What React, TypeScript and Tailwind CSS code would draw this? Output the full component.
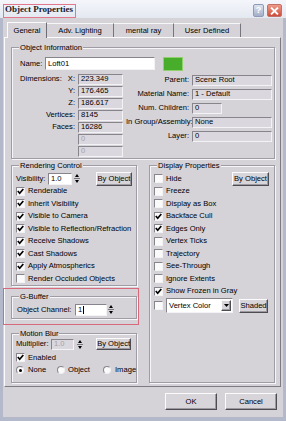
const sunken = "border border-t-[#87848c] border-l-[#87848c] border-r-[#f3f2f5] border-b-[#f3f2f5]";
const raised = "border border-t-[#fbfbfc] border-l-[#fbfbfc] border-r-[#4e4c53] border-b-[#4e4c53] shadow-[inset_-1px_-1px_0_#9c99a1]";

function Box({ on }: { on?: boolean }) {
  return (
    <span className={`w-[9px] h-[9px] shrink-0 bg-[#fafafb] ${sunken} flex items-center justify-center`}>
      {on && (
        <svg width="7" height="7" viewBox="0 0 7 7">
          <path d="M0.8 3 L2.7 5.2 L6.3 1" fill="none" stroke="#000" strokeWidth="1.7" />
        </svg>
      )}
    </span>
  );
}

function Radio({ on }: { on?: boolean }) {
  return (
    <span className="w-[8px] h-[8px] shrink-0 rounded-full bg-[#fafafb] border border-t-[#87848c] border-l-[#87848c] border-r-[#eeeef0] border-b-[#eeeef0] flex items-center justify-center">
      {on && <span className="w-[3px] h-[3px] rounded-full bg-black" />}
    </span>
  );
}

function Spin() {
  return (
    <span className="w-[6px] h-[11px] shrink-0 flex flex-col">
      <span className="flex-1 flex items-center justify-center border-b border-[#77747c]">
        <svg width="4" height="3" viewBox="0 0 4 3"><path d="M2 0 L4 3 L0 3Z" fill="#000" /></svg>
      </span>
      <span className="flex-1 flex items-center justify-center">
        <svg width="4" height="3" viewBox="0 0 4 3"><path d="M0 0 L4 0 L2 3Z" fill="#000" /></svg>
      </span>
    </span>
  );
}

function Btn({ label, className }: { label: string; className: string }) {
  return (
    <span className={`${raised} bg-[#d7d4da] flex items-center justify-center shrink-0 ${className}`}>{label}</span>
  );
}

function Group({ title, className, children }: { title: string; className: string; children?: React.ReactNode }) {
  return (
    <fieldset className={`border border-[#9f9ca5] shadow-[inset_1px_1px_0_#f6f6f8,1px_1px_0_#f6f6f8] ${className}`}>
      <legend className="ml-[7px] px-[1px] leading-[9px] bg-[#d5d2d8]">{title}</legend>
      {children}
    </fieldset>
  );
}

function CheckRow({ label, on, pad }: { label: string; on?: boolean; pad: string }) {
  return (
    <div className={`h-[12.5px] flex items-center gap-[3px] ${pad}`}>
      <Box on={on} />
      <span>{label}</span>
    </div>
  );
}

function RO({ v, w, dim }: { v: string; w: string; dim?: boolean }) {
  return (
    <span className={`${w} h-[11px] ${sunken} bg-[#dad8de] flex items-center pl-[2px] ${dim ? "text-[#a3a1a8]" : ""}`}>{v}</span>
  );
}

export default function App() {
  const leftInfo: [string, string, string, boolean?][] = [
    ["Dimensions:", "X:", "223.349"],
    ["", "Y:", "176.465"],
    ["", "Z:", "186.617"],
    ["", "Vertices:", "8145"],
    ["", "Faces:", "16286"],
    ["", "", "0", true],
    ["", "", "0", true],
  ];
  const rightInfo: [string, string, string][] = [
    ["Parent:", "Scene Root", "w-[80px]"],
    ["Material Name:", "1 - Default", "w-[80px]"],
    ["Num. Children:", "0", "w-[30px]"],
    ["In Group/Assembly:", "None", "w-[80px]"],
    ["Layer:", "0", "w-[80px]"],
  ];
  const render: [string, boolean][] = [
    ["Renderable", true],
    ["Inherit Visibility", true],
    ["Visible to Camera", true],
    ["Visible to Reflection/Refraction", true],
    ["Receive Shadows", true],
    ["Cast Shadows", true],
    ["Apply Atmospherics", true],
    ["Render Occluded Objects", false],
  ];
  const display: [string, boolean][] = [
    ["Freeze", false],
    ["Display as Box", false],
    ["Backface Cull", true],
    ["Edges Only", true],
    ["Vertex Ticks", false],
    ["Trajectory", false],
    ["See-Through", false],
    ["Ignore Extents", false],
    ["Show Frozen in Gray", true],
  ];

  return (
    <div className="w-[286px] h-[421px] relative overflow-hidden bg-[#b3b8cb] flex flex-col font-['Liberation_Sans',Arial,sans-serif] text-[7.6px] leading-none text-black">
      {/* title bar */}
      <div className="h-[18px] shrink-0 flex items-center bg-gradient-to-b from-[#f4f6fb] to-[#e4e8f0]">
        <span className="ml-[5px] mt-[1px] font-['Liberation_Serif',serif] font-bold text-[9px] text-[#1b1b2a]">Object Properties</span>
        <span className="ml-auto w-[11px] h-[13px] mt-[3px] rounded-[2px] bg-gradient-to-b from-[#dce2ee] to-[#a3afc9] border border-[#8e9ab6] text-white font-bold text-[9px] flex items-center justify-center">?</span>
        <span className="ml-[3px] mr-[4px] w-[15px] h-[13px] mt-[3px] rounded-[2px] bg-gradient-to-b from-[#ee9a88] to-[#cf4b3a] border border-[#c4706a] flex items-center justify-center">
          <svg width="9" height="8" viewBox="0 0 9 8"><path d="M1 0.5 L8 7.5 M8 0.5 L1 7.5" stroke="#fff" strokeWidth="1.8" /></svg>
        </span>
      </div>

      {/* client */}
      <div className="flex-1 mx-[3px] mb-[4px] bg-[#d5d2d8] flex flex-col">
        {/* tabs */}
        <div className="h-[19px] shrink-0 flex items-end pl-[4px]">
          <div className="w-[40px] h-[16px] -mb-[1px] z-10 bg-[#d5d2d8] border-t border-l border-[#fbfbfc] border-r border-r-[#6f6d75] flex items-center justify-center">General</div>
          {[
            ["Adv. Lighting", "w-[67px]"],
            ["mental ray", "w-[60px]"],
            ["User Defined", "w-[67px]"],
          ].map(([t, w]) => (
            <div key={t} className={`${w} h-[14px] border-t border-[#f7f7f9] border-r border-r-[#77757c] flex items-center justify-center`}>{t}</div>
          ))}
        </div>

        {/* tab page */}
        <div className="ml-[1px] w-[277px] h-[350px] shrink-0 border border-t-[#fbfbfc] border-l-[#fbfbfc] border-r-[#7c7a82] border-b-[#7c7a82] flex flex-col">
          <Group title="Object Information" className="ml-[6px] mt-[5px] w-[264px] h-[116px] shrink-0">
            <div className="mt-[5px] h-[13px] flex items-center pl-[8px]">
              <span className="w-[25px]">Name:</span>
              <span className={`w-[110px] h-[13px] bg-white ${sunken} flex items-center pl-[2px]`}>Loft01</span>
              <span className="ml-[8px] w-[20px] h-[14px] bg-[#48ad2b] border border-[#8fcf6c]" />
            </div>
            <div className="mt-[3px] flex">
              <div className="w-[114px] flex flex-col">
                {leftInfo.map(([a, b, v, dim], i) => (
                  <div key={i} className="h-[12px] flex items-center">
                    <span className="w-[66px] pl-[8px] pr-[3px] flex justify-between">
                      <span>{a}</span>
                      <span>{b}</span>
                    </span>
                    <RO v={v} w="w-[45px]" dim={dim} />
                  </div>
                ))}
              </div>
              <div className="flex-1 flex flex-col">
                {rightInfo.map(([a, v, w]) => (
                  <div key={a} className="h-[14px] flex items-center">
                    <span className="w-[66px] pr-[3px] text-right whitespace-nowrap">{a}</span>
                    <RO v={v} w={w} />
                  </div>
                ))}
              </div>
            </div>
          </Group>

          <div className="mt-[2px] ml-[6px] flex gap-[12px]">
            <div className="w-[126px] flex flex-col">
              <Group title="Rendering Control" className="h-[125px]">
                <div className="mt-[2px] h-[13px] flex items-center pl-[4px]">
                  <span className="w-[32px]">Visibility:</span>
                  <span className={`w-[24px] h-[12px] bg-white ${sunken} flex items-center pl-[2px]`}>1.0</span>
                  <span className="ml-[2px]"><Spin /></span>
                  <Btn label="By Object" className="ml-auto mr-[4px] w-[36px] h-[14px]" />
                </div>
                {render.map(([t, on]) => (
                  <CheckRow key={t} label={t} on={on} pad="pl-[4px]" />
                ))}
              </Group>
              <Group title="G-Buffer" className="mt-[6px] h-[27px]">
                <div className="mt-[2px] h-[13px] flex items-center pl-[5px]">
                  <span className="w-[58px]">Object Channel:</span>
                  <span className={`w-[32px] h-[12px] bg-white ${sunken} flex items-center pl-[2px]`}>
                    1<span className="w-px h-[8px] bg-black ml-[1px]" />
                  </span>
                  <span className="ml-[1px]"><Spin /></span>
                </div>
              </Group>
              <Group title="Motion Blur" className="mt-[10px] h-[54px]">
                <div className="h-[12px] flex items-center pl-[4px]">
                  <span className="w-[35px]">Multiplier:</span>
                  <RO v="1.0" w="w-[23px]" dim />
                  <span className="ml-[3px]"><Spin /></span>
                  <Btn label="By Object" className="ml-auto mr-[5px] w-[35px] h-[12px]" />
                </div>
                <div className="mt-[1px] h-[13px] flex items-center gap-[3px] pl-[4px]">
                  <Box on />
                  <span>Enabled</span>
                </div>
                <div className="h-[12px] flex items-center pl-[4px]">
                  <Radio on />
                  <span className="ml-[4px] w-[29px]">None</span>
                  <Radio />
                  <span className="ml-[3px] w-[35px]">Object</span>
                  <Radio />
                  <span className="ml-[4px]">Image</span>
                </div>
              </Group>
            </div>

            <Group title="Display Properties" className="w-[126px] h-[222px]">
              <div className="mt-[2px] h-[13px] flex items-center gap-[3px] pl-[4px]">
                <Box />
                <span>Hide</span>
                <Btn label="By Object" className="ml-auto mr-[5px] w-[37px] h-[14px]" />
              </div>
              {display.map(([t, on]) => (
                <CheckRow key={t} label={t} on={on} pad="pl-[4px]" />
              ))}
              <div className="h-[16px] flex items-center pl-[4px]">
                <Box />
                <span className={`ml-[3px] w-[67px] h-[15px] bg-white ${sunken} flex items-center pl-[2px]`}>
                  <span className="flex-1">Vertex Color</span>
                  <span className={`w-[10px] h-[11px] ${raised} bg-[#d7d4da] flex items-center justify-center mr-[1px]`}>
                    <svg width="5" height="3" viewBox="0 0 5 3"><path d="M0 0 L5 0 L2.5 3Z" fill="#000" /></svg>
                  </span>
                </span>
                <Btn label="Shaded" className="ml-[6px] w-[29px] h-[14px]" />
              </div>
            </Group>
          </div>
        </div>

        {/* dialog buttons */}
        <div className="mt-[6px] flex pl-[162px]">
          <Btn label="OK" className="w-[52px] h-[17px]" />
          <Btn label="Cancel" className="ml-[8px] w-[52px] h-[17px]" />
        </div>
      </div>

      {/* annotation boxes */}
      <div className="absolute left-[3px] top-[4px] w-[73px] h-[14px] border-[1.5px] border-[#e2788e]" />
      <div className="absolute left-[3px] top-[288px] w-[136px] h-[37px] border-[1.5px] border-[#d8697a]" />
    </div>
  );
}
